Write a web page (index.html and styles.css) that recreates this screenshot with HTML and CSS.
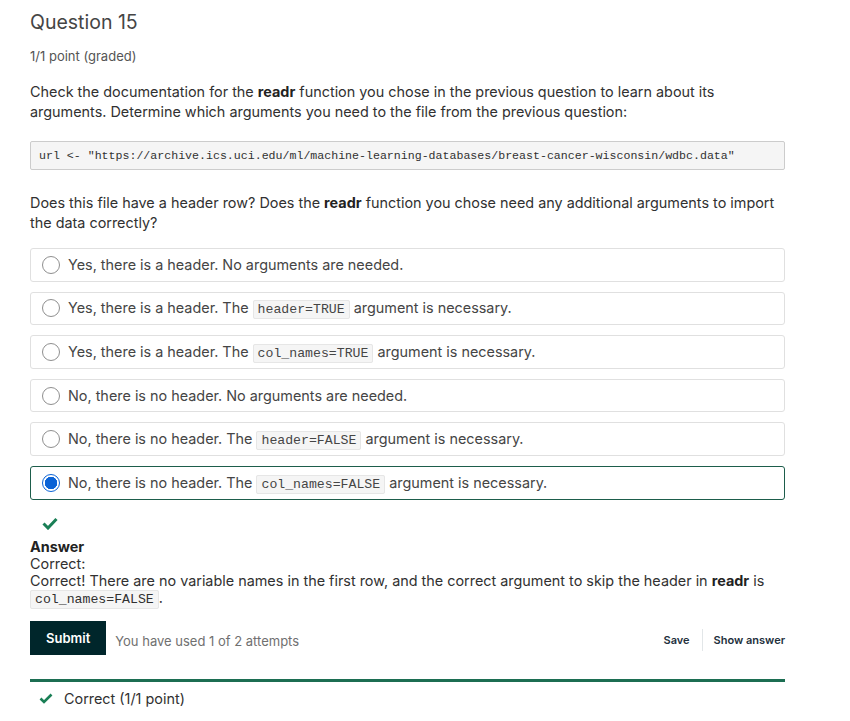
FILE: index.html
```html
<!DOCTYPE html>
<html>
<head>
<meta charset="utf-8">
<link rel="stylesheet" href="styles.css">
</head>
<body>
<div class="problem">
  <h3 class="title">Question 15</h3>
  <div class="points">1/1 point (graded)</div>
  <p class="text">Check the documentation for the <b>readr</b> function you chose in the previous question to learn about its arguments. Determine which arguments you need to the file from the previous question:</p>
  <pre class="codeblock">url &lt;- "https://archive.ics.uci.edu/ml/machine-learning-databases/breast-cancer-wisconsin/wdbc.data"</pre>
  <p class="text q2">Does this file have a header row? Does the <b>readr</b> function you chose need any additional arguments to import the data correctly?</p>
  <div class="options">
    <div class="opt"><span class="radio"></span><span>Yes, there is a header. No arguments are needed.</span></div>
    <div class="opt"><span class="radio"></span><span>Yes, there is a header. The <code>header=TRUE</code> argument is necessary.</span></div>
    <div class="opt"><span class="radio"></span><span>Yes, there is a header. The <code>col_names=TRUE</code> argument is necessary.</span></div>
    <div class="opt"><span class="radio"></span><span>No, there is no header. No arguments are needed.</span></div>
    <div class="opt"><span class="radio"></span><span>No, there is no header. The <code>header=FALSE</code> argument is necessary.</span></div>
    <div class="opt selected"><span class="radio on"></span><span>No, there is no header. The <code>col_names=FALSE</code> argument is necessary.</span></div>
  </div>
  <div class="status-check">
    <svg width="16" height="13" viewBox="0 0 16 13"><path d="M1.5 6.5 L6 11 L14.5 2" fill="none" stroke="#1a7f56" stroke-width="3"/></svg>
  </div>
  <div class="answer">
    <div class="ans-title">Answer</div>
    <div>Correct:</div>
    <div>Correct! There are no variable names in the first row, and the correct argument to skip the header in <b>readr</b> is <code>col_names=FALSE</code>.</div>
  </div>
  <div class="actions">
    <button class="submit">Submit</button>
    <span class="attempts">You have used 1 of 2 attempts</span>
    <span class="spacer"></span>
    <span class="link">Save</span>
    <span class="sep"></span>
    <span class="link">Show answer</span>
  </div>
  <div class="notification">
    <svg width="14" height="11" viewBox="0 0 14 11"><path d="M1.5 5.5 L5 9 L12.5 1.5" fill="none" stroke="#1a7f56" stroke-width="2.6"/></svg>
    <span>Correct (1/1 point)</span>
  </div>
</div>
</body>
</html>
```

FILE: styles.css
```css
html, body { margin: 0; padding: 0; background: #fff; }
body {
  font-family: Inter, "Noto Sans", sans-serif;
  color: #313131;
}
.problem {
  width: 755px;
  padding: 10px 0 0 30px;
}
.title {
  margin: 0;
  font-size: 19.5px;
  font-weight: 400;
  color: #454545;
  line-height: 24px;
}
.points {
  margin-top: 14px;
  font-size: 13px;
  color: #555;
  line-height: 16px;
}
.text {
  margin: 18px 0 0 0;
  font-size: 14.4px;
  line-height: 20px;
  color: #313131;
}
.text b { color: #222; }
.codeblock {
  margin: 19px 0 0 0;
  background: #f5f5f5;
  border: 1px solid #ccc;
  border-radius: 2px;
  padding: 7px 8px 6px 8px;
  font-family: "Liberation Mono", "DejaVu Sans Mono", monospace;
  font-size: 11.6px;
  line-height: 14px;
  color: #313131;
}
.q2 { margin-top: 23px; }
.options {
  margin-top: 15px;
  display: flex;
  flex-direction: column;
  gap: 10px;
}
.opt {
  display: flex;
  align-items: center;
  gap: 8px;
  height: 33.6px;
  box-sizing: border-box;
  border: 1px solid #e0e0e0;
  border-radius: 3px;
  padding: 0 11px;
  font-size: 14.4px;
  color: #454545;
}
.opt.selected { border-color: #1d5d4b; }
.radio {
  width: 18px;
  height: 18px;
  box-sizing: border-box;
  border: 1px solid #8f8f8f;
  border-radius: 50%;
  background: #fff;
  flex: none;
}
.radio.on {
  border: 1.5px solid #0b63d6;
  background: radial-gradient(circle, #0b63d6 0 6px, #fff 6.5px 100%);
}
code {
  font-family: "Liberation Mono", "DejaVu Sans Mono", monospace;
  font-size: 13.2px;
  background: #f5f5f5;
  border: 1px solid #e6e6e6;
  border-radius: 2px;
  padding: 1px 4px;
  color: #454545;
}
.status-check {
  margin: 14px 0 0 12px;
  height: 14px;
}
.answer {
  margin-top: 10px;
  font-size: 14.4px;
  line-height: 17px;
  color: #313131;
}
.ans-title { font-weight: 700; color: #222; }
.answer b { color: #222; }
.answer code { color: #313131; }
.actions {
  margin-top: 13px;
  display: flex;
  align-items: center;
}
.submit {
  background: #00262b;
  color: #fff;
  border: none;
  border-radius: 0;
  font-family: Inter, sans-serif;
  font-weight: 600;
  font-size: 13px;
  height: 34px;
  padding: 0 16px;
  margin: 0;
}
.attempts {
  margin-left: 9px;
  margin-top: 6px;
  font-size: 13px;
  color: #707070;
}
.spacer { flex: 1; }
.link {
  font-size: 11px;
  font-weight: 600;
  color: #23303c;
  margin-top: 4px;
}
.sep {
  width: 1px;
  height: 22px;
  background: #e2e6e8;
  margin: 4px 11px 0 12px;
}
.notification {
  margin-top: 24px;
  border-top: 3px solid #1c6e52;
  padding: 8px 0 0 9px;
  display: flex;
  align-items: center;
  gap: 11px;
  font-size: 14.4px;
  color: #313131;
}
```
